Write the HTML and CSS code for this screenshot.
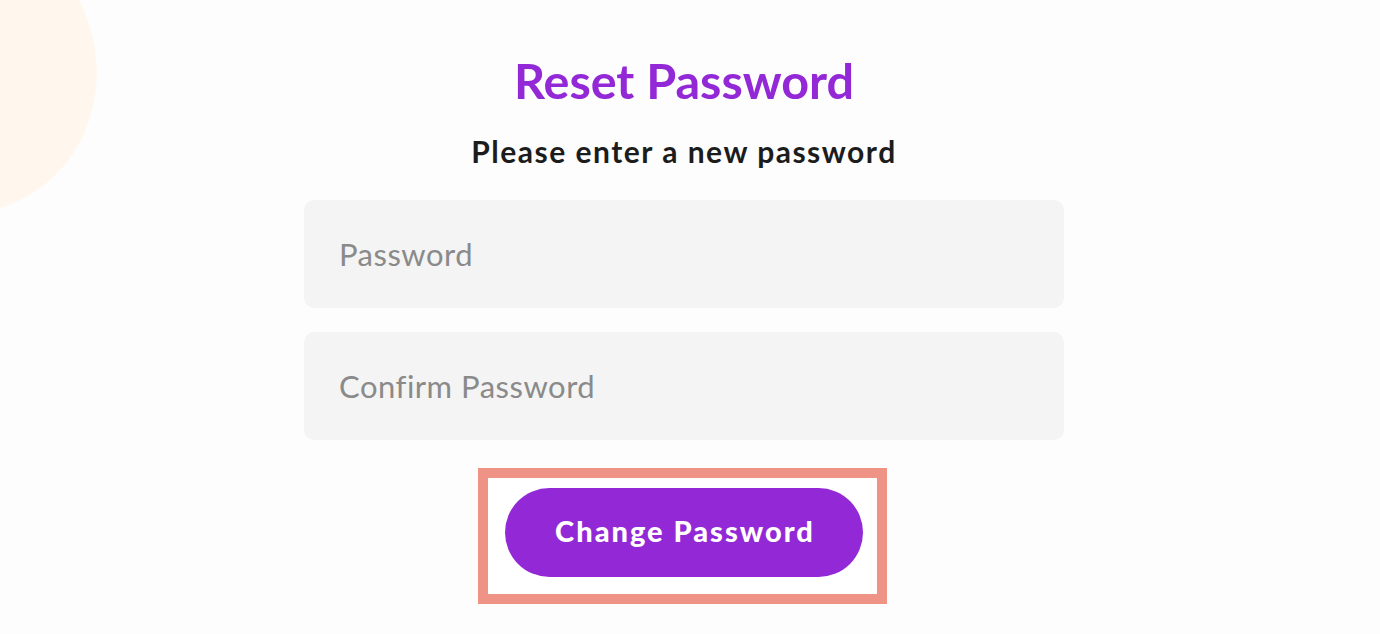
FILE: index.html
```html
<!DOCTYPE html>
<html lang="en">
<head>
<meta charset="utf-8">
<title>Reset Password</title>
<link rel="stylesheet" href="styles.css">
</head>
<body>
<div class="blob"></div>
<main class="page">
  <h1 class="title">Reset Password</h1>
  <p class="subtitle">Please enter a new password</p>
  <form class="form">
    <input class="field" type="password" placeholder="Password">
    <input class="field" type="password" placeholder="Confirm Password">
    <div class="highlight">
      <button class="btn" type="button">Change Password</button>
    </div>
  </form>
</main>
</body>
</html>
```

FILE: styles.css
```css
* { box-sizing: border-box; }
html, body { margin: 0; height: 100%; }
body {
  background: #fdfdfd;
  font-family: Lato, "Open Sans", sans-serif;
  overflow: hidden;
  position: relative;
}
.blob {
  position: absolute;
  left: -185px;
  top: -85px;
  width: 280px;
  height: 300px;
  border-radius: 50%;
  background: #fff7ee;
  transform: rotate(-25deg);
}
.page {
  position: relative;
  display: flex;
  flex-direction: column;
  align-items: center;
  padding: 51px 12px 0 0;
}
.title {
  margin: 0;
  font-size: 48.5px;
  line-height: 58px;
  font-weight: 700;
  color: #9329d6;
}
.subtitle {
  margin: 24px 0 0;
  font-size: 30px;
  line-height: 36px;
  font-weight: 700;
  letter-spacing: 1.5px;
  color: #1c1c1c;
}
.form {
  display: flex;
  flex-direction: column;
  align-items: center;
  gap: 24px;
  margin-top: 31px;
}
.field {
  width: 760px;
  height: 108px;
  border: none;
  border-radius: 10px;
  background: #f4f4f4;
  padding: 0 35px;
  font-family: Lato, sans-serif;
  font-size: 31px;
  letter-spacing: 0.5px;
  color: #333;
  outline: none;
}
.field::placeholder { color: #8a8a8a; }
.highlight {
  margin: 4px 3px 0 0;
  border: 10px solid #f09387;
  background: #fff;
  padding: 10px 14px 17px 17px;
}
.btn {
  display: block;
  width: 358px;
  height: 89px;
  border: none;
  border-radius: 45px;
  background: #9329d6;
  color: #fff;
  font-family: Lato, sans-serif;
  font-weight: 900;
  font-size: 29px;
  letter-spacing: 2px;
  padding: 0 0 5px 2px;
  cursor: pointer;
}
```
